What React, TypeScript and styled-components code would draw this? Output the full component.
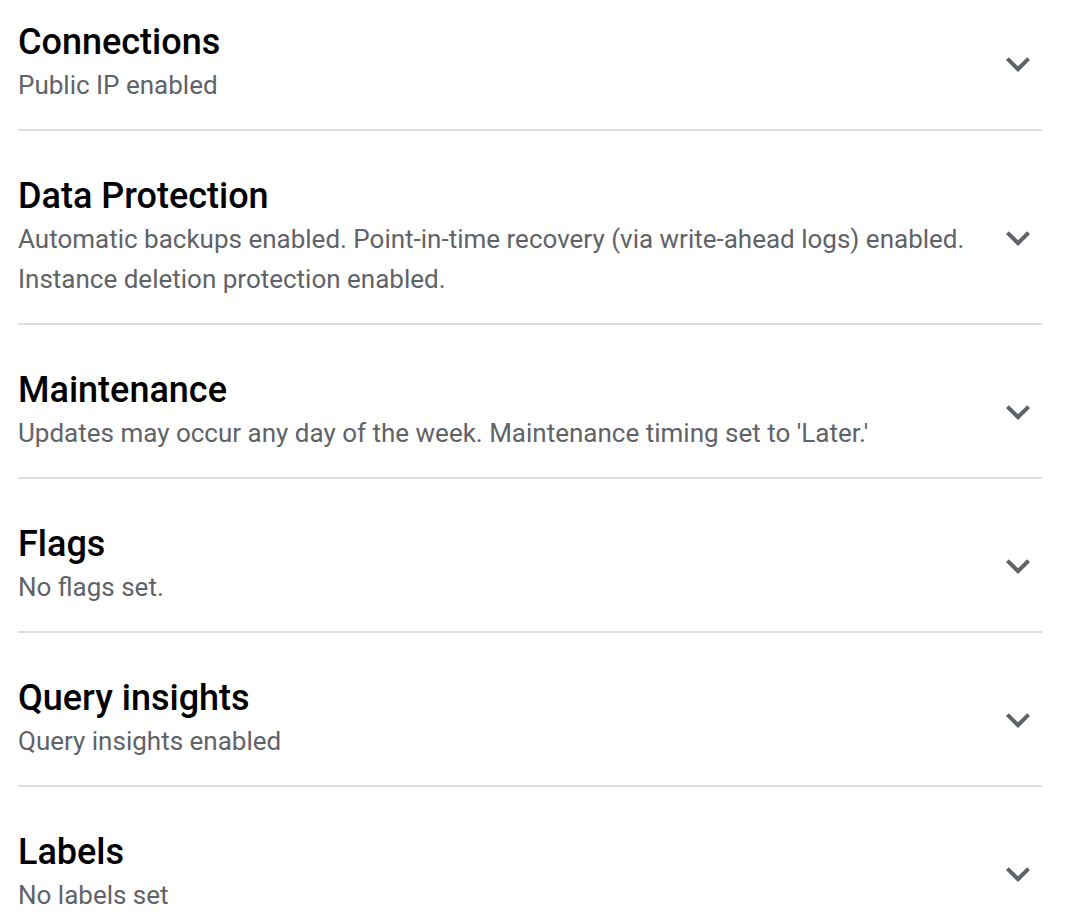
import { FC } from 'react'
import styled, { createGlobalStyle } from 'styled-components'

interface ISection {
  title: string
  summary: string
}

const sections: ISection[] = [
  { title: 'Connections', summary: 'Public IP enabled' },
  {
    title: 'Data Protection',
    summary:
      'Automatic backups enabled. Point-in-time recovery (via write-ahead logs) enabled. Instance deletion protection enabled.',
  },
  {
    title: 'Maintenance',
    summary: "Updates may occur any day of the week. Maintenance timing set to 'Later.'",
  },
  { title: 'Flags', summary: 'No flags set.' },
  { title: 'Query insights', summary: 'Query insights enabled' },
  { title: 'Labels', summary: 'No labels set' },
]

const GlobalStyle = createGlobalStyle({
  body: {
    margin: 0,
    background: '#fff',
    fontFamily: 'Roboto, "Liberation Sans", Arial, sans-serif',
  },
})

const List = styled.div({
  width: 1024,
  marginLeft: 18,
})

const Row = styled.div<{ $first?: boolean }>(({ $first }) => ({
  display: 'flex',
  alignItems: 'center',
  padding: `${$first ? 22 : 45}px 0 24px`,
  borderBottom: '2px solid #e0e0e0',
  cursor: 'pointer',
}))

const Body = styled.div({
  flex: 1,
  minWidth: 0,
  display: 'flex',
  flexDirection: 'column',
  gap: 3,
})

const Title = styled.div({
  fontSize: 36,
  lineHeight: '40px',
  fontWeight: 500,
  color: '#000',
})

const Summary = styled.div({
  fontSize: 26,
  lineHeight: '40px',
  color: '#5f6368',
  paddingRight: 10,
})

const Toggle = styled.div({
  width: 48,
  height: 48,
  display: 'flex',
  alignItems: 'center',
  justifyContent: 'center',
  color: '#5f6368',
})

const Chevron: FC = () => (
  <svg width='52' height='52' viewBox='0 0 24 24' fill='currentColor'>
    <path d='M16.59 8.59L12 13.17 7.41 8.59 6 10l6 6 6-6z' />
  </svg>
)

export default function App() {
  return (
    <>
      <GlobalStyle />
      <List>
        {sections.map((s, i) => (
          <Row key={s.title} $first={i === 0}>
            <Body>
              <Title>{s.title}</Title>
              <Summary>{s.summary}</Summary>
            </Body>
            <Toggle>
              <Chevron />
            </Toggle>
          </Row>
        ))}
      </List>
    </>
  )
}
